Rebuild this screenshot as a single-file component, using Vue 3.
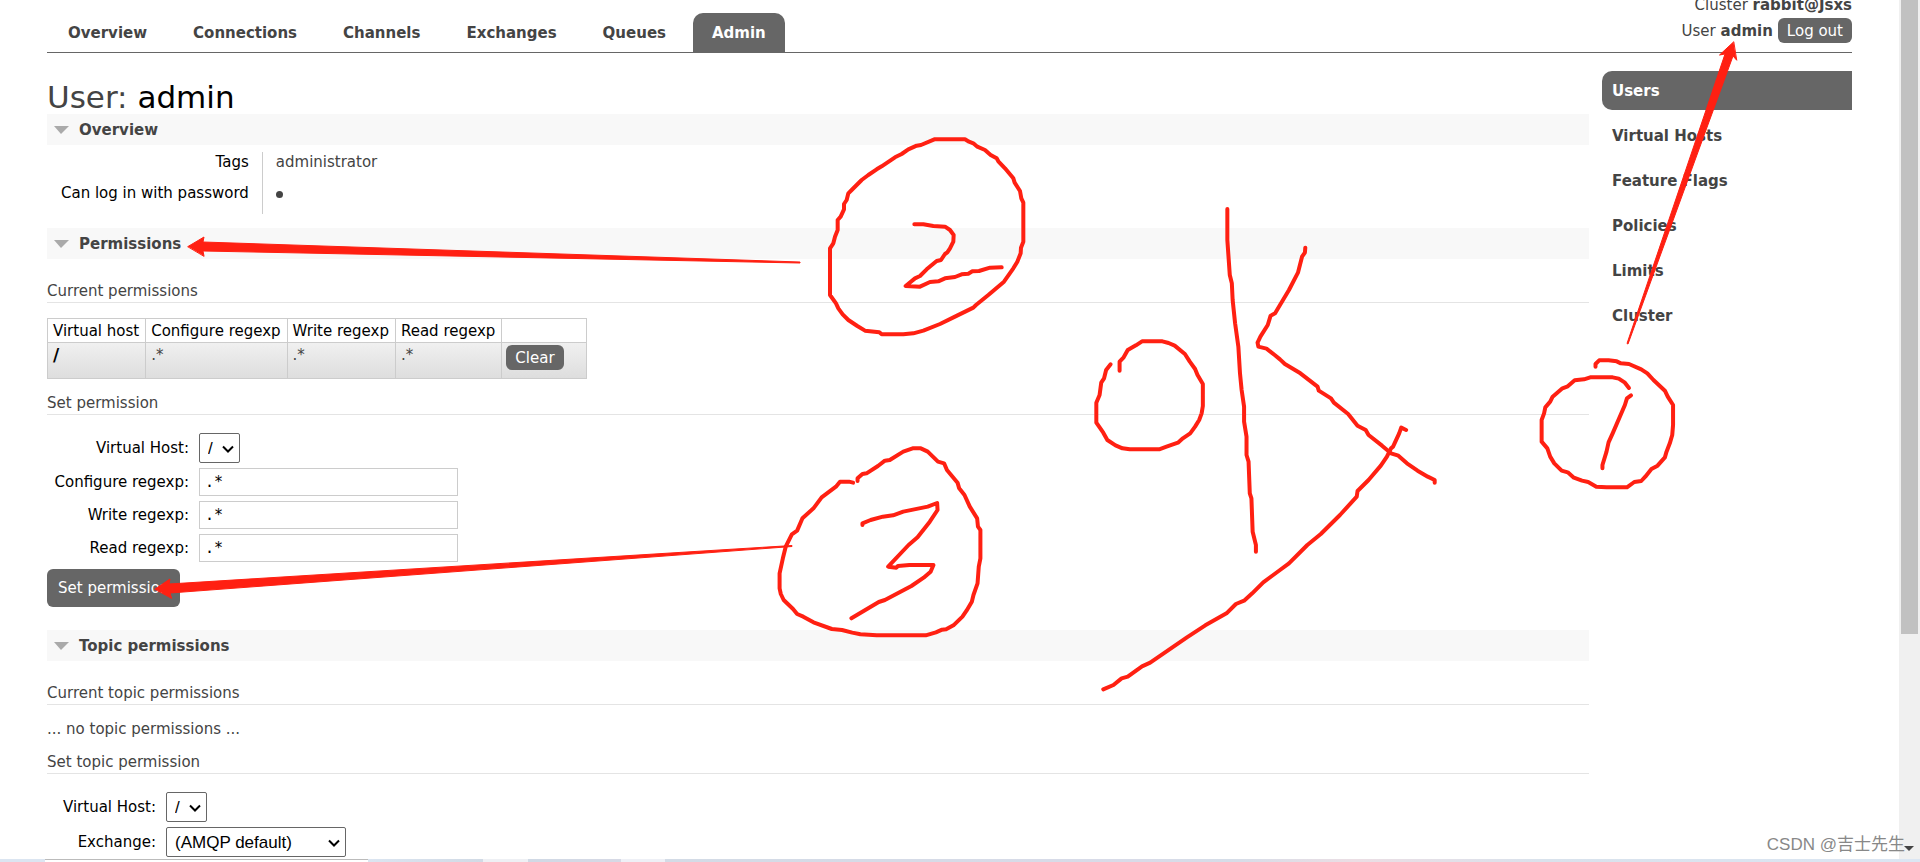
<script setup>
import { ref } from 'vue'

const tabs = ['Overview', 'Connections', 'Channels', 'Exchanges', 'Queues', 'Admin']
const sideItems = ['Users', 'Virtual Hosts', 'Feature Flags', 'Policies', 'Limits', 'Cluster']
const regexps = [
  { id: 'configure', label: 'Configure regexp:', value: ref('.*') },
  { id: 'write', label: 'Write regexp:', value: ref('.*') },
  { id: 'read', label: 'Read regexp:', value: ref('.*') },
]
</script>

<template>
  <div class="window">
    <div class="page">
      <header class="top">
        <nav class="tabs">
          <a v-for="t in tabs" :key="t" href="#" :class="{ active: t === 'Admin' }">{{ t }}</a>
        </nav>
        <div class="account">
          <p>Cluster <b>rabbit@Jsxs</b></p>
          <p class="user"><span>User <b>admin</b></span><button class="small">Log out</button></p>
        </div>
      </header>

      <div class="columns">
        <main class="main">
          <h1>User: <b>admin</b></h1>

          <h2><i></i>Overview</h2>
          <table class="facts">
            <tbody>
              <tr><th scope="row">Tags</th><td>administrator</td></tr>
              <tr><th scope="row">Can log in with password</th><td><span class="dot"></span></td></tr>
            </tbody>
          </table>

          <h2><i></i>Permissions</h2>
          <h3>Current permissions</h3>
          <table class="list">
            <thead>
              <tr><th>Virtual host</th><th>Configure regexp</th><th>Write regexp</th><th>Read regexp</th><th></th></tr>
            </thead>
            <tbody>
              <tr>
                <td><a href="#">/</a></td><td>.*</td><td>.*</td><td>.*</td>
                <td class="action"><button class="small">Clear</button></td>
              </tr>
            </tbody>
          </table>

          <h3 class="follow">Set permission</h3>
          <form class="form" @submit.prevent>
            <label for="vhost">Virtual Host:</label>
            <div class="pick"><select id="vhost"><option>/</option></select><svg viewBox="0 0 12 8"><path d="M1 1.5 6 6.5 11 1.5" /></svg></div>
            <template v-for="r in regexps" :key="r.id">
              <label :for="r.id">{{ r.label }}</label>
              <input :id="r.id" v-model="r.value.value" type="text">
            </template>
            <button class="submit">Set permission</button>
          </form>

          <h2><i></i>Topic permissions</h2>
          <h3>Current topic permissions</h3>
          <p class="none">... no topic permissions ...</p>
          <h3 class="tight">Set topic permission</h3>
          <form class="form topic" @submit.prevent>
            <label for="tvhost">Virtual Host:</label>
            <div class="pick"><select id="tvhost"><option>/</option></select><svg viewBox="0 0 12 8"><path d="M1 1.5 6 6.5 11 1.5" /></svg></div>
            <label for="exchange">Exchange:</label>
            <div class="pick wide"><select id="exchange"><option>(AMQP default)</option></select><svg viewBox="0 0 12 8"><path d="M1 1.5 6 6.5 11 1.5" /></svg></div>
          </form>
        </main>

        <nav class="side">
          <a v-for="s in sideItems" :key="s" href="#" :class="{ active: s === 'Users' }">{{ s }}</a>
        </nav>
      </div>
    </div>

    <div class="scroll"><div class="thumb"></div><svg viewBox="0 0 10 5"><path d="M0 0h10L5 5z" /></svg></div>
    <div class="edge"><span class="e1"></span><span class="e2"></span><span class="e3"></span><span class="e4"></span><span class="e5"></span><span class="e6"></span><span class="e7"></span></div>
    <div class="watermark">CSDN @吉士先生</div>

    <!-- hand-drawn annotations over the page -->
    <svg class="ink" aria-hidden="true">
      <g class="fill">
        <path d="M188 246.500 204 237 203 242 800 262 800 263 203 251 204 256Z" />
        <path d="M155 589 170 579 169 584 792 545.500 792 546.500 170 593 171.500 598Z" />
        <path d="M1733.500 42 1719.500 55 1725 54 1627 343.500 1628 344 1733 56 1736.500 60Z" />
      </g>
      <g transform="translate(600 120) scale(.33333)">
        <path d="M1003 58H1095L1107 65 1120 70 1132 80 1155 90 1172 105 1190 115 1195 124 1215 145 1240 175 1244 188 1260 213 1264 235 1270 248V365L1263 383 1262 400 1252 425 1240 445 1212 485 1165 525 1128 555 1120 563 1065 590 1020 612 970 632 940 640 910 643H845L838 637 795 632 772 618 745 600 728 583 715 565 708 550 690 525 690 385 700 370 705 350 713 330 713 300 722 290 732 268 732 252 740 240 745 220 755 210 785 180 805 165 830 148 845 139 885 112 905 102 925 88 950 77 963 75Z" />
        <path d="M943 313H970L1000 318 1035 320 1050 330 1061 345 1060 365 1050 385 1042 397 1035 402 1023 420 1010 423 980 448 960 468 945 475 917 498 960 500 990 486 1015 484 1035 475 1065 471 1085 463 1105 461 1117 454 1137 453 1170 443 1205 442" />
      </g>
      <g transform="translate(640 300) scale(.40816 .33333)">
        <path d="M1175 212V185L1185 172 1195 150 1215 136 1230 124H1280L1295 129 1310 137 1335 162 1347 185 1360 207 1366 225 1379 252V318L1376 340 1370 360 1360 380 1348 400 1330 415 1318 428 1290 440 1272 448H1200L1182 445 1165 436 1145 420 1135 398 1118 368V308L1126 285 1130 248 1137 235 1142 210 1153 193" />
        <path d="M1439 -273V-180L1445 -75 1450 -50 1452 0 1458 70 1466 140 1470 220 1474 270 1480 320 1480 365 1486 410 1486 465 1491 485 1494 580 1498 595 1501 695 1509 735 1509 755" />
        <path d="M1630 -157 1629 -142 1622 -130 1612 -82 1590 -30 1568 15 1556 40 1545 47 1538 75 1520 110 1513 128 1515 140 1535 146 1555 165 1568 178 1580 192 1618 220 1660 260 1663 272 1693 295 1700 308 1735 342 1758 377 1778 390 1785 405 1818 437 1840 460 1858 467 1879 490 1905 512 1930 530 1947 540 1947 548" />
        <path d="M1877 390 1865 383 1860 400 1845 440 1840 445 1830 470 1815 497 1785 540 1758 573 1756 590 1715 645 1668 702 1635 735 1590 790 1568 810 1527 847 1500 880 1480 902 1460 912 1437 940 1385 976 1340 1012 1250 1088 1230 1099 1195 1130 1180 1135 1160 1155 1135 1168" />
        <path d="M533 543 533 535 545 522 555 520 583 498 600 482 612 480 645 455 668 445H688L705 455 730 485 745 490 752 510 778 548 782 565 795 585 808 620 826 655 828 680 834 690V775L830 800 827 850 817 885 813 905 800 932 790 950 768 976 750 988 740 989 725 997 700 1006H580L540 1003 520 998 495 990 470 987 425 967 400 950 385 942 375 927 352 900 345 882 342 865 342 820 350 775 357 740 372 703 385 692 398 655 425 625 445 592 480 560 490 545 512 545 522 548" />
        <path d="M545 675 545 670 565 660 595 650 620 646 645 635 705 620 728 609 729 630 710 665 680 712 658 735 608 800 628 803 632 798 660 795 719 795 712 815 695 833 665 858 600 900 585 906 518 955" />
      </g>
      <g transform="translate(1280 300) scale(.40816 .33333)">
        <path d="M773 200 773 192 782 181H805L825 184 835 190 855 192 885 208 900 220 915 240 943 272 950 290 963 315V375L961 405 955 430 947 455 943 472 925 497 910 507 895 530 885 543 868 546 850 562H800L775 560 755 546 740 542 720 533 705 517 690 512 672 490 662 470 655 445 641 425V360L647 340 650 322 662 305 668 290 692 265 705 259 722 241 745 238 760 232H815L830 236 845 248 855 264" />
        <path d="M860 286 850 295 845 315 815 400 805 427 800 455 790 495 790 505" />
      </g>
    </svg>
  </div>
</template>

<style>
html, body { margin: 0; background: #fff; }
#app { height: 100vh; overflow: hidden; }
</style>

<style scoped>
.window {
  position: relative;
  height: 100%;
  overflow: hidden;
  color: #444;
  font: 15px/20px "DejaVu Sans", Verdana, sans-serif;
}
.page { margin: 0 68px 0 47px; }
a { color: inherit; text-decoration: none; }
p, h1, h2, h3 { margin: 0; }
.top {
  display: flex;
  justify-content: space-between;
  align-items: flex-end;
  height: 52px;
  border-bottom: 1px solid #666;
}
.tabs { display: flex; gap: 8px; padding-left: 2px; }
.tabs a {
  padding: 11px 19px 9px;
  line-height: 19px;
  border-radius: 10px 10px 0 0;
  font-weight: bold;
}
.tabs a.active, .side a.active { background: #666; color: #fff; }
.account { text-align: right; padding-bottom: 9px; }
.user { display: flex; align-items: center; justify-content: flex-end; gap: 5px; margin-top: 3px; }
button {
  border: 0;
  background: #666;
  color: #fff;
  font: inherit;
  border-radius: 6px;
  cursor: pointer;
}
.small { padding: 3px 9px 2px; }
.columns { display: flex; gap: 13px; }
.main { flex: 1; min-width: 0; }
h1 { padding-top: 27px; font-size: 31px; line-height: 34px; font-weight: normal; }
h1 b { color: #000; font-weight: normal; }
h2 {
  display: flex;
  align-items: center;
  gap: 10px;
  height: 31px;
  padding-left: 7px;
  background: #f8f8f8;
  font-size: 15px;
}
h2 i { border: 8px solid transparent; border-top-color: #aaa; border-bottom: 0; border-left-width: 7px; border-right-width: 8px; }
h3 {
  padding-top: 22px;
  line-height: 21px;
  border-bottom: 1px solid #e4e4e4;
  font-size: 15px;
  font-weight: normal;
}
.facts { margin: 7px 0 14px; border-collapse: collapse; }
.facts th, .facts td { height: 31px; padding: 0 13px; vertical-align: top; }
.facts th { color: #000; font-weight: normal; text-align: right; border-right: 1px solid #ccc; }
.facts th { padding-left: 14px; }
.dot { display: inline-block; width: 7px; height: 7px; border-radius: 50%; background: #444; }
.list { margin-top: 15px; border-collapse: collapse; }
.list th, .list td { border: 1px solid #ccc; padding: 2px 6px 1px 5px; text-align: left; vertical-align: top; }
.list th { color: #000; font-weight: normal; }
.list tbody tr { background: linear-gradient(#f0f0f0, #ddd); height: 36px; }
.list td a { color: #000; font-weight: bold; font-size: 17px; }
.list .action { width: 76px; padding: 2px 4px; }
h3.follow { padding-top: 14px; }
.form {
  display: grid;
  grid-template-columns: 142px 259px;
  justify-content: start;
  align-items: center;
  column-gap: 10px;
  row-gap: 5px;
  margin: 18px 0 23px;
}
.form label { color: #000; text-align: right; }
input {
  height: 28px;
  box-sizing: border-box;
  padding: 0 5px;
  border: 1px solid #ccc;
  background: #fff;
  color: #000;
  font: 15px "DejaVu Sans Mono", monospace;
}
.pick { position: relative; width: 41px; height: 30px; }
.pick select {
  width: 100%;
  height: 100%;
  appearance: none;
  border: 1px solid #666;
  border-radius: 2px;
  background: #fff;
  color: #000;
  padding: 0 8px;
  font: 17px "Liberation Sans", Arial, sans-serif;
}
.pick svg { position: absolute; right: 6px; top: 12px; width: 12px; height: 8px; pointer-events: none; }
.pick path { fill: none; stroke: #000; stroke-width: 2; }
.pick.wide { width: 180px; }
.submit { grid-column: 1 / -1; justify-self: start; margin-top: 2px; padding: 9px 11px; }
.topic { grid-template-columns: 109px 259px; margin: 18px 0 0; }
.none { padding-top: 14px; }
h3.tight { padding-top: 13px; }
.side { width: 250px; margin-top: 18px; display: flex; flex-direction: column; gap: 6px; }
.side a { padding: 11px 10px 9px; line-height: 19px; border-radius: 10px 0 0 10px; font-weight: bold; }
.scroll { position: absolute; top: 0; right: 0; bottom: 3px; width: 21px; background: #f0f0f0; }
.thumb { width: 17px; height: 634px; margin-left: 2px; background: #c1c1c1; }
.scroll svg { position: absolute; right: 6px; bottom: 8px; width: 10px; height: 5px; fill: #444; }
.edge { position: absolute; left: 0; right: 0; bottom: 0; height: 3px; display: flex; background: #dbe5f1; }
.e1 { width: 45px; }
.e2 { width: 323px; background: #fff; border-top: 1px solid #bbb; }
.e3 { width: 115px; background: linear-gradient(90deg, #dbe5f1, #d1dae5); }
.e4 { width: 45px; background: #eef0f4; }
.e5 { width: 93px; background: linear-gradient(90deg, #d0d9e5, #d6d9e5); }
.e6 { width: 44px; background: #eef0f6; }
.e7 { flex: 1; background: linear-gradient(90deg, #d3dbe6, #d8dbe8 38%, #d5dde8 45%, #ebdee4 55%, #d9e2ec 70%, #dbe6f3); }
.watermark {
  position: absolute;
  right: 15px;
  bottom: 7px;
  color: #888;
  font: 17px/20px "Liberation Sans", "Noto Sans CJK SC", sans-serif;
}
.ink { position: absolute; left: 0; top: 0; width: 100%; height: 100%; pointer-events: none; }
.ink path { fill: none; stroke: #ff2012; stroke-width: 4; stroke-linecap: round; stroke-linejoin: round; vector-effect: non-scaling-stroke; }
.ink .fill path { fill: #ff2012; stroke-width: 1; stroke-linejoin: miter; }
</style>
